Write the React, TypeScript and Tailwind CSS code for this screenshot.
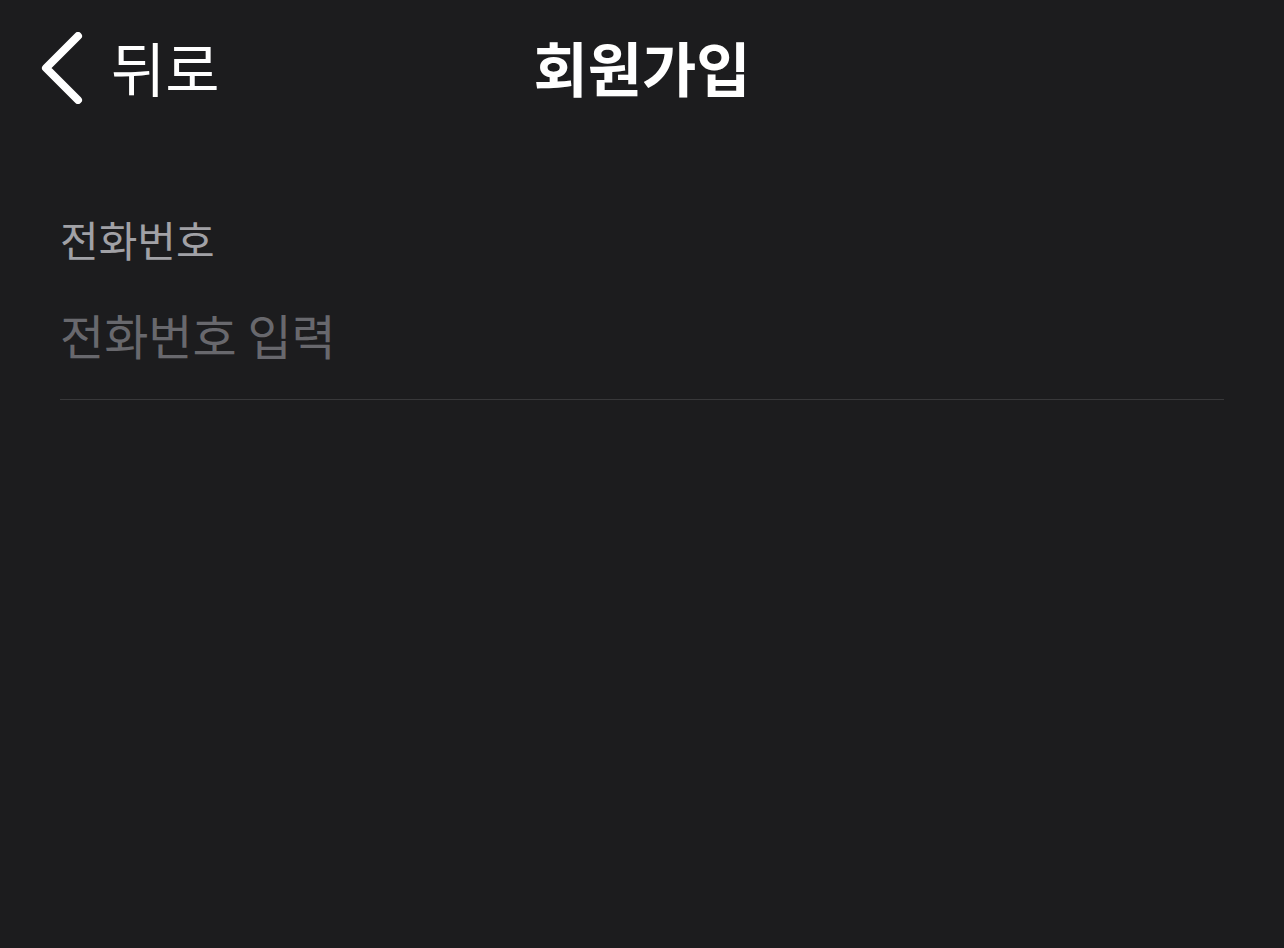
import React from "react";

export default function App() {
  return (
    <div
      className="w-[1284px] h-[948px] bg-[#1c1c1e] flex flex-col"
      style={{ fontFamily: '"Noto Sans CJK KR", "Noto Sans", sans-serif' }}
    >
      <div className="relative h-[136px] flex items-center px-[40px]">
        <div className="flex items-center gap-[27px] text-white">
          <svg width="44" height="72" viewBox="0 0 44 72" fill="none">
            <path
              d="M38 4 L6 36 L38 68"
              stroke="white"
              strokeWidth="8"
              strokeLinecap="round"
              strokeLinejoin="round"
            />
          </svg>
          <span className="text-[59px] leading-none -mt-[4px]">뒤로</span>
        </div>
        <div className="absolute inset-x-0 top-0 h-[136px] flex items-center justify-center pointer-events-none">
          <span className="text-[59px] leading-none font-bold text-white -mt-[4px]">회원가입</span>
        </div>
      </div>
      <div className="px-[60px] pt-[82px]">
        <div className="text-[42px] leading-none text-[#a1a1a6]">전화번호</div>
        <input
          className="mt-[39px] w-full bg-transparent outline-none text-[48px] leading-none text-white placeholder:text-[#68686d]"
          placeholder="전화번호 입력"
        />
        <div className="mt-[30px] h-px bg-[#38383a]" />
      </div>
    </div>
  );
}
